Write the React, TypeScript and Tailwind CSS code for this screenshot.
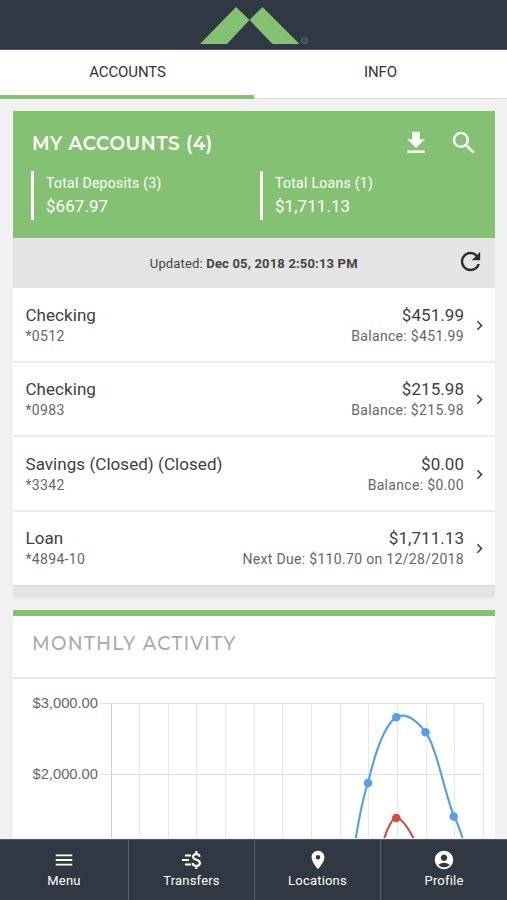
import type { ReactNode } from "react";
import {
  MdAccountCircle,
  MdChevronRight,
  MdFileDownload,
  MdLocationOn,
  MdMenu,
  MdRefresh,
  MdSearch,
} from "react-icons/md";

const accounts = [
  { name: "Checking", number: "*0512", amount: "$451.99", detail: "Balance: $451.99" },
  { name: "Checking", number: "*0983", amount: "$215.98", detail: "Balance: $215.98" },
  { name: "Savings (Closed) (Closed)", number: "*3342", amount: "$0.00", detail: "Balance: $0.00" },
  { name: "Loan", number: "*4894-10", amount: "$1,711.13", detail: "Next Due: $110.70 on 12/28/2018" },
];

const columns = Array.from({ length: 14 }, (_, i) => 97.5 + i * 28.65);

function Logo() {
  return (
    <svg width="112" height="38" viewBox="0 0 112 38" className="ml-1">
      <path d="M0 37 36 0 49.500 13 27 37ZM49.500 13 62.500 0 99.500 37H72.500Z" fill="#85c172" />
      <circle cx="104.500" cy="33.500" r="3.200" fill="#4a545f" stroke="#59636d" strokeWidth=".8" />
      <path d="M103.500 35.500v-4h1.500q1 1 0 2h-1.500m1.500 0 1 2" fill="none" stroke="#303844" strokeWidth=".7" />
    </svg>
  );
}

function TransferIcon() {
  return (
    <svg width="22" height="20" viewBox="0 0 22 20" fill="none" stroke="currentColor">
      <path d="M4 5.500h6M1 10h7M4 14.500h6" strokeWidth="1.900" />
      <path
        d="M18.500 6.800C18.500 5 17.200 4.100 15.300 4.100S12 5.100 12 6.800C12 10.700 18.900 9 18.900 13C18.900 14.900 17.400 15.900 15.300 15.900S11.700 14.800 11.700 13M15.300 1V4M15.300 16V19"
        strokeWidth="2.100"
      />
    </svg>
  );
}

function Total({ label, value }: { label: string; value: string }) {
  return (
    <div className="h-[49px] border-l-[3px] border-white pl-3 pt-[2px]">
      <div className="text-[14px] leading-[20px] tracking-[0.28px]">{label}</div>
      <div className="text-[17px] leading-[26px] tracking-[0.05px]">{value}</div>
    </div>
  );
}

function NavItem({ label, icon }: { label: string; icon: ReactNode }) {
  return (
    <button className="flex flex-col items-center border-r border-[#58626c] pt-[10px] last:border-r-0">
      <span className="flex h-5 items-center">{icon}</span>
      <span className="mt-[2px] text-[13px] leading-[18px] tracking-[0.2px]">{label}</span>
    </button>
  );
}

function Chart() {
  return (
    <svg width="482" height="159" viewBox="0 0 482 159" className="block">
      {columns.map((x, i) => (
        <path key={x} d={`M${Math.round(x) + 0.5} 24V159`} stroke={i === 0 ? "#cfcfcf" : "#e7e7e7"} />
      ))}
      <path d="M87 24.500H471M87 95.500H471" stroke="#e0e0e0" />
      <g fill="#666" fontSize="14" fontFamily="'Liberation Sans', Arial, sans-serif">
        <text x="19.500" y="29" textLength="65.500" lengthAdjust="spacingAndGlyphs">$3,000.00</text>
        <text x="19.500" y="100" textLength="65.500" lengthAdjust="spacingAndGlyphs">$2,000.00</text>
      </g>
      <g fill="none" strokeWidth="2.200">
        <path d="M370 164C374 148 380 139 383.500 139C388 139 395 148 403 164" stroke="#cd4e43" />
        <path d="M342 164C346 139 349 121 355 104C361 78 370 47 383.500 38C394 33 404 42 412.500 53C424 69 432 116 441 137Q446 147 451 164" stroke="#59a0e5" />
      </g>
      <circle cx="383.300" cy="139" r="4.300" fill="#cd4e43" />
      <g fill="#59a0e5">
        <circle cx="355" cy="104" r="4.300" />
        <circle cx="383.300" cy="38.300" r="4.300" />
        <circle cx="412.500" cy="53.300" r="4.300" />
        <circle cx="440.700" cy="137.500" r="4.300" />
      </g>
    </svg>
  );
}

export default function App() {
  return (
    <div className="flex h-[900px] w-[507px] flex-col overflow-hidden bg-[#f1f1f1] font-['Roboto',sans-serif] text-[#444]">
      <header className="flex h-[50px] shrink-0 justify-center border-b border-[#555b66] bg-[#303844] pt-[7px]">
        <Logo />
      </header>
      <nav className="flex h-[49px] shrink-0 border-b border-[#dadada] bg-white text-[15px] tracking-[-0.12px] text-[#333]">
        <button className="-mb-px w-[254px] border-b-4 border-[#85c172] pb-px pl-px">ACCOUNTS</button>
        <button className="flex-1 pb-1">INFO</button>
      </nav>

      <main className="min-h-0 flex-1 overflow-hidden pl-[13px] pr-3 pt-3">
        <section className="w-[482px]">
          <div className="h-[127px] bg-[#85c172] pl-[18px] pt-5 text-white">
            <div className="flex h-6 items-center">
              <h1 className="flex-1 origin-left scale-x-[0.923] whitespace-nowrap pl-px font-['Montserrat','Lato',sans-serif] text-[20px] font-semibold leading-6 tracking-[0.7px]">
                MY ACCOUNTS (4)
              </h1>
              <MdFileDownload size={30} className="mr-[18px]" />
              <MdSearch size={30} className="mr-4" />
            </div>
            <div className="mt-4 grid grid-cols-[229px_1fr]">
              <Total label="Total Deposits (3)" value="$667.97" />
              <Total label="Total Loans (1)" value="$1,711.13" />
            </div>
          </div>
          <div className="flex h-[50px] items-center bg-[#e4e4e4] pr-[10.5px] text-[13px] tracking-[0.17px]">
            <p className="flex-1 pl-[39px] pt-[2px] text-center">
              Updated: <b className="font-bold">Dec 05, 2018 2:50:13 PM</b>
            </p>
            <MdRefresh size={29} className="mb-[3px] text-[#2b2b2b]" />
          </div>
          <div className="bg-white">
            {accounts.map((a) => (
              <div
                key={a.number}
                className="flex h-[74.5px] items-center border-b-2 border-[#ececec] pl-[12.5px] pr-[6px] pt-[2px] last:border-b last:border-[#d5d5d5] last:pt-px"
              >
                <div className="flex-1">
                  <div className="text-[17px] leading-[21px] tracking-[0.05px] text-[#404040]">{a.name}</div>
                  <div className="text-[14px] leading-[20px] tracking-[0.32px] text-[#666]">{a.number}</div>
                </div>
                <div className="text-right">
                  <div className="text-[17px] leading-[21px] tracking-[0.05px] text-[#404040]">{a.amount}</div>
                  <div className="text-[14px] leading-[20px] tracking-[0.32px] text-[#666]">{a.detail}</div>
                </div>
                <MdChevronRight size={19} className="ml-[6px] text-[#444]" />
              </div>
            ))}
          </div>
          <div className="h-3 rounded-b-[3px] bg-[#e3e3e3]" />
        </section>

        <section className="mt-3 w-[482px] border-t-[6px] border-[#85c172] bg-white">
          <div className="h-[63px] border-b-2 border-[#e6e6e6] pl-[19px] pt-[15px]">
            <h2 className="origin-left scale-x-[0.925] whitespace-nowrap font-['Montserrat','Lato',sans-serif] text-[20px] font-[550] leading-6 tracking-[1.35px] text-[#aaa]">
              MONTHLY ACTIVITY
            </h2>
          </div>
          <Chart />
        </section>
      </main>

      <footer className="grid h-[61px] shrink-0 grid-cols-[129px_126px_126px_126px] border-t border-[#525a60] bg-[#303844] text-white">
        <NavItem label="Menu" icon={<MdMenu size={22} />} />
        <NavItem label="Transfers" icon={<TransferIcon />} />
        <NavItem label="Locations" icon={<MdLocationOn size={22} />} />
        <NavItem label="Profile" icon={<MdAccountCircle size={22} />} />
      </footer>
    </div>
  );
}
